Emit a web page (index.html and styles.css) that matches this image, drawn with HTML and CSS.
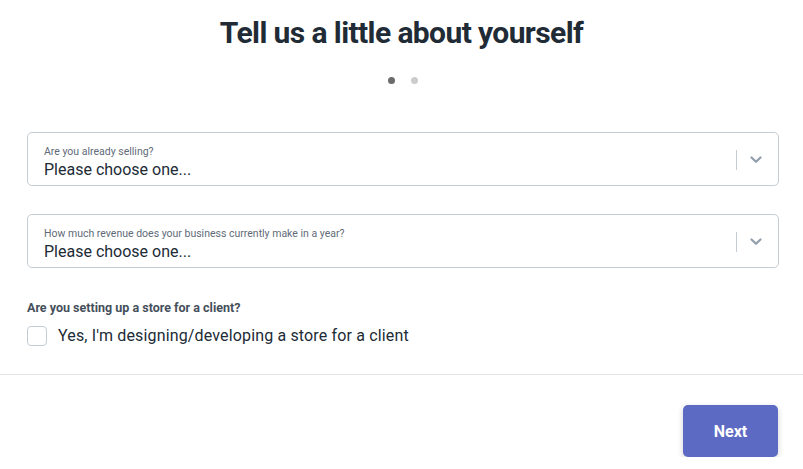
FILE: index.html
```html
<!DOCTYPE html>
<html>
<head>
<meta charset="utf-8">
<link rel="stylesheet" href="styles.css">
</head>
<body>
<div class="page">
  <h1 class="title">Tell us a little about yourself</h1>
  <div class="dots"><span class="dot active"></span><span class="dot"></span></div>
  <div class="form">
    <div class="select">
      <div class="select-text">
        <div class="select-label">Are you already selling?</div>
        <div class="select-value">Please choose one...</div>
      </div>
      <div class="select-sep"></div>
      <svg class="chevron" width="12" height="8" viewBox="0 0 12 8"><path d="M1.5 1.5 L6 5.8 L10.5 1.5" fill="none" stroke="#919eab" stroke-width="2.2" stroke-linecap="round" stroke-linejoin="round"/></svg>
    </div>
    <div class="select">
      <div class="select-text">
        <div class="select-label">How much revenue does your business currently make in a year?</div>
        <div class="select-value">Please choose one...</div>
      </div>
      <div class="select-sep"></div>
      <svg class="chevron" width="12" height="8" viewBox="0 0 12 8"><path d="M1.5 1.5 L6 5.8 L10.5 1.5" fill="none" stroke="#919eab" stroke-width="2.2" stroke-linecap="round" stroke-linejoin="round"/></svg>
    </div>
    <div class="question">Are you setting up a store for a client?</div>
    <label class="check-row"><span class="checkbox"></span><span class="check-text">Yes, I'm designing/developing a store for a client</span></label>
  </div>
  <div class="footer">
    <button class="next">Next</button>
  </div>
</div>
</body>
</html>
```
FILE: styles.css
```css
html, body { margin: 0; padding: 0; background: #fff; }
body { font-family: Roboto, "Liberation Sans", sans-serif; color: #212b36; }
.page { width: 803px; }
.title {
  margin: 0;
  padding-top: 15px;
  text-align: center;
  font-family: Roboto, "Liberation Sans", sans-serif;
  font-weight: 700;
  font-size: 30px;
  line-height: 36px;
  letter-spacing: -0.6px;
  color: #212b36;
}
.dots { display: flex; justify-content: center; gap: 16px; margin-top: 26px; height: 7px; padding-left: 2px; }
.dot { width: 7px; height: 7px; border-radius: 50%; background: #cccccc; }
.dot.active { background: #6b6b6b; }
.form { margin: 48px 24px 0 27px; }
.select {
  display: flex;
  align-items: center;
  height: 52px;
  border: 1px solid #c4cdd5;
  border-radius: 5px;
  margin-bottom: 28px;
}
.select-text { flex: 1; padding-left: 16px; padding-top: 6px; }
.select-label { font-size: 10.5px; line-height: 14px; color: #5f6b78; }
.select-value { font-size: 16px; line-height: 21px; color: #212b36; }
.select-sep { width: 1px; height: 20px; background: #c4cdd5; margin-top: 1px; }
.chevron { margin: 1px 16px 0 13px; }
.question { font-size: 12.5px; font-weight: 700; color: #454f5b; margin-top: 32px; line-height: 16px; }
.check-row { display: flex; align-items: center; margin-top: 10px; }
.checkbox { width: 18px; height: 18px; border: 1px solid #c4cdd5; border-radius: 4px; box-sizing: content-box; }
.check-text { font-size: 16px; margin-left: 11px; color: #212b36; line-height: 20px; letter-spacing: 0.15px; }
.footer { border-top: 1px solid #e3e3e3; margin-top: 28px; display: flex; justify-content: flex-end; padding: 30px 25px 0 0; }
.next {
  width: 95px; height: 52px;
  background: #5c6ac4;
  color: #fff;
  border: none;
  border-radius: 5px;
  font-family: Roboto, "Liberation Sans", sans-serif;
  font-weight: 700;
  font-size: 16px;
  box-shadow: 0 2px 6px rgba(0,0,0,0.18);
}
```
